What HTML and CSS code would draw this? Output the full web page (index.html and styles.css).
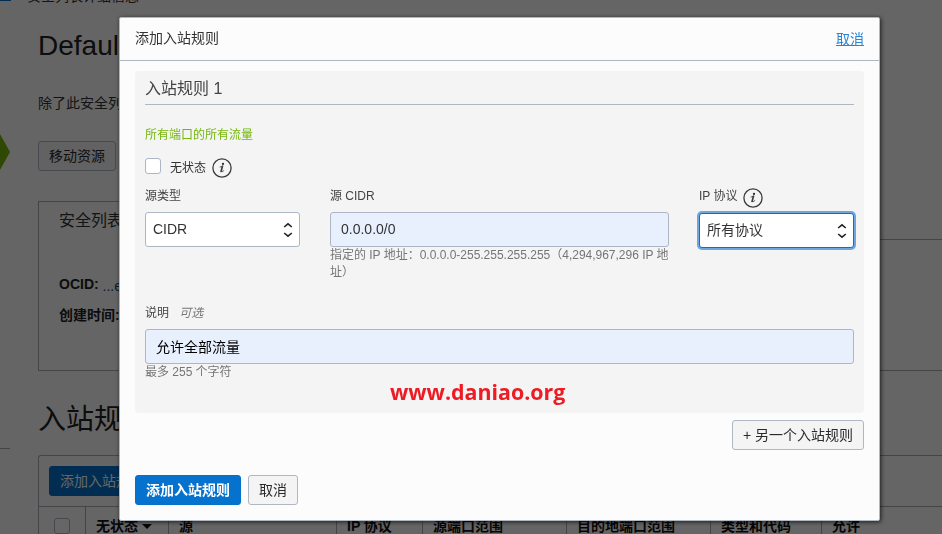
FILE: index.html
```html
<!DOCTYPE html>
<html lang="zh-CN">
<head>
<meta charset="utf-8">
<title>添加入站规则</title>
<link rel="stylesheet" href="styles.css">
</head>
<body>
<div class="page">
  <aside class="rail">
    <div class="rail-logo"></div>
    <div class="rail-status"></div>
    <div class="rail-divider"></div>
  </aside>
  <main class="content">
    <nav class="crumbs">安全列表详细信息</nav>
    <h1>Default</h1>
    <p class="intro">除了此安全列表</p>
    <button class="btn move">移动资源</button>
    <section class="tabs">
      <div class="tab">安全列表信息</div>
      <div class="tab-rest"></div>
    </section>
    <section class="details">
      <p><b>OCID:</b> <a class="ocid">...eaaaa</a></p>
      <p><b>创建时间:</b></p>
    </section>
    <h2>入站规则</h2>
    <section class="table">
      <div class="toolbar"><button class="btn primary">添加入站规则</button></div>
      <div class="thead">
        <span class="check-cell"><i class="checkbox"></i></span>
        <span>无状态 <i class="sort"></i></span>
        <span>源</span>
        <span>IP 协议</span>
        <span>源端口范围</span>
        <span>目的地端口范围</span>
        <span>类型和代码</span>
        <span>允许</span>
      </div>
    </section>
  </main>
</div>
<div class="overlay"></div>
<div class="modal" role="dialog">
  <header class="modal-head"><span>添加入站规则</span><a class="close">取消</a></header>
  <section class="rule">
    <h3>入站规则 1</h3>
    <p class="summary">所有端口的所有流量</p>
    <div class="stateless">
      <i class="checkbox"></i><span>无状态</span>
      <svg class="info" viewBox="0 0 20 20"><circle cx="10" cy="10" r="9.1"/><circle class="dot" cx="11" cy="5.9" r="1.15"/><path class="stem" d="M10.4 8.4L9.1 13.4"/><path class="serif" d="M8 9L10.8 8.2M9.1 13.6Q9.8 14.6 11.8 12.7"/></svg>
    </div>
    <div class="fields">
      <div class="field">
        <label>源类型</label>
        <div class="select"><span>CIDR</span><svg class="arrows" viewBox="0 0 10 16"><path d="M1.2 5L5 1.8L8.8 5M1.2 11L5 14.2L8.8 11"/></svg></div>
      </div>
      <div class="field">
        <label>源 CIDR</label>
        <div class="input">0.0.0.0/0</div>
        <div class="hint">指定的 IP 地址：0.0.0.0-255.255.255.255（4,294,967,296 IP 地址）</div>
      </div>
      <div class="field">
        <label>IP 协议 <svg class="info" viewBox="0 0 20 20"><circle cx="10" cy="10" r="9.1"/><circle class="dot" cx="11" cy="5.9" r="1.15"/><path class="stem" d="M10.4 8.4L9.1 13.4"/><path class="serif" d="M8 9L10.8 8.2M9.1 13.6Q9.8 14.6 11.8 12.7"/></svg></label>
        <div class="select focused"><span>所有协议</span><svg class="arrows" viewBox="0 0 10 16"><path d="M1.2 5L5 1.8L8.8 5M1.2 11L5 14.2L8.8 11"/></svg></div>
      </div>
    </div>
    <div class="field description">
      <label>说明 <em>可选</em></label>
      <div class="input dark">允许全部流量</div>
      <div class="hint">最多 255 个字符</div>
    </div>
    <div class="mark">www.daniao.org</div>
  </section>
  <div class="more"><button class="btn">+ 另一个入站规则</button></div>
  <footer><button class="btn primary strong">添加入站规则</button><button class="btn">取消</button></footer>
</div>
</body>
</html>
```

FILE: styles.css
```css
* { box-sizing: border-box; }
body, h1, h2, h3, p { margin: 0; font-weight: 400; }
body {
  height: 534px;
  overflow: hidden;
  background: #fcfcfc;
  color: #333;
  font: 14px/20px "Liberation Sans", "Noto Sans CJK SC", sans-serif;
}

.btn {
  display: inline-block;
  height: 30px;
  padding: 0 10px;
  border: 1px solid #b0b7c3;
  border-radius: 3px;
  background: #f4f4f4;
  color: #2a2a2a;
  font: inherit;
  line-height: 28px;
  white-space: nowrap;
}
.primary { border-color: #0572ce; background: #0572ce; color: #fff; }
.strong { font-weight: 700; }
.checkbox {
  display: block;
  width: 16px;
  height: 16px;
  border: 1px solid #adb6c4;
  border-radius: 3px;
  background: #fff;
}

/* Page behind the dialog */
.page { display: flex; height: 534px; overflow: hidden; }
.rail { width: 38px; flex: none; }
.rail-logo { width: 11px; height: 1px; background: #0572ce; }
.rail-status {
  width: 10px;
  height: 36px;
  margin-top: 133px;
  background: #75b70c;
  clip-path: polygon(0 0, 100% 50%, 0 100%);
}
.rail-divider { width: 10px; height: 1px; margin-top: 278px; background: #a8adb3; }
.content { width: 904px; flex: none; }
.crumbs { height: 20px; margin: -14px 0 0 -11px; white-space: nowrap; }
h1 { margin-top: 22px; font-size: 28px; line-height: 36px; color: #222; }
.intro { margin-top: 29px; }
.move { display: block; margin-top: 28px; }
.tabs { display: flex; height: 39px; margin-top: 30px; }
.tab {
  width: 130px;
  padding: 9px 20px;
  border: solid #a8adb3;
  border-width: 1px 1px 0;
  font-size: 16px;
  white-space: nowrap;
}
.tab-rest { flex: 1; border-bottom: 1px solid #a8adb3; }
.details {
  height: 131px;
  padding: 34px 20px;
  border: solid #a8adb3;
  border-width: 0 0 1px 1px;
}
.details p { height: 31px; }
.details b { color: #222; }
.ocid { position: relative; top: 2px; color: #174d7c; }
h2 { margin: 29px 0 15px; font-size: 28px; line-height: 40px; color: #222; }
.table { border: solid #a8adb3; border-width: 1px 0 0 1px; border-radius: 3px 0 0; }
.toolbar { height: 51px; padding: 10px; border-bottom: 1px solid #a8adb3; }
.thead {
  display: grid;
  grid-template-columns: 47px 83px 168px 86px 144px 144px 111px 1fr;
  height: 40px;
  color: #111;
  font-weight: 700;
}
.thead span { padding: 9px 10px; border-right: 1px solid #a8adb3; white-space: nowrap; }
.thead span:last-child { border-right: 0; }
.thead .check-cell { padding: 11px 15px; }
.sort {
  display: inline-block;
  border: solid transparent;
  border-width: 5px 5px 0;
  border-top-color: #111;
  vertical-align: 2px;
}
.overlay { position: fixed; inset: 0; background: rgba(0, 0, 0, .6); }

/* Dialog */
.modal {
  position: absolute;
  left: 119px;
  top: 17px;
  width: 761px;
  height: 504px;
  border: 1px solid #b0b7c3;
  border-radius: 2px;
  background: #fcfcfc;
  box-shadow: 1px 1px 4px rgba(0, 0, 0, .7);
}
.modal-head {
  display: flex;
  justify-content: space-between;
  height: 43px;
  padding: 10px 15px;
  border-bottom: 1px solid #adb6c1;
}
.close { margin-top: 1px; color: #2a86d4; text-decoration: underline; }
.rule {
  height: 342px;
  margin: 10px 15px 0;
  padding: 0 10px;
  border-radius: 4px;
  background: #f4f4f4;
  font-size: 12px;
  line-height: 17px;
}
h3 {
  height: 34px;
  border-bottom: 1px solid #adb6c1;
  color: #444;
  font-size: 16px;
  line-height: 35px;
}
.summary { margin-top: 22px; color: #75b70c; }
.stateless { display: flex; align-items: center; height: 20px; margin-top: 14px; }
.stateless .checkbox { margin: -4px 9px 0 0; }
.info {
  width: 20px;
  height: 20px;
  margin-left: 6px;
  fill: none;
  stroke: #3a3a3a;
  stroke-width: 1.3;
  stroke-linecap: round;
  stroke-linejoin: round;
}
.info .dot { fill: #333; stroke: none; }
.info .stem { stroke-width: 1.7; }
.info .serif { stroke-width: .8; }
.fields {
  display: grid;
  grid-template-columns: 155px 339px 155px;
  justify-content: space-between;
  height: 117px;
  margin-top: 9px;
}
label { display: flex; height: 25px; padding-top: 1px; color: #444; white-space: pre; }
label .info { margin: 0 0 0 2px; flex: none; }
.input, .select {
  height: 35px;
  padding: 0 10px;
  border: 1px solid #adb6c4;
  border-radius: 3px;
  font-size: 14px;
  line-height: 33px;
}
.input { background: #e8effd; }
.dark { color: #000; line-height: 34px; }
.select {
  display: flex;
  align-items: center;
  justify-content: space-between;
  padding: 0 6px 0 7px;
  background: #fff;
}
.focused { margin-top: 1px; border-color: #0572ce; box-shadow: 0 0 0 2px #6ea6df; }
.arrows { width: 10px; height: 16px; fill: none; stroke: #222; stroke-width: 1.6; }
.hint { margin-right: -4px; color: #757575; letter-spacing: -.01px; }
.description em { margin-left: 7px; color: #777; }
.mark {
  width: max-content;
  margin: -1px 0 0 245px;
  color: #ed1c24;
  font: 700 21.4px/24px "Open Sans", sans-serif;
}
.more { display: flex; justify-content: flex-end; margin: 7px 15px 0; }
footer { display: flex; gap: 7px; margin: 25px 15px 0; }
```
